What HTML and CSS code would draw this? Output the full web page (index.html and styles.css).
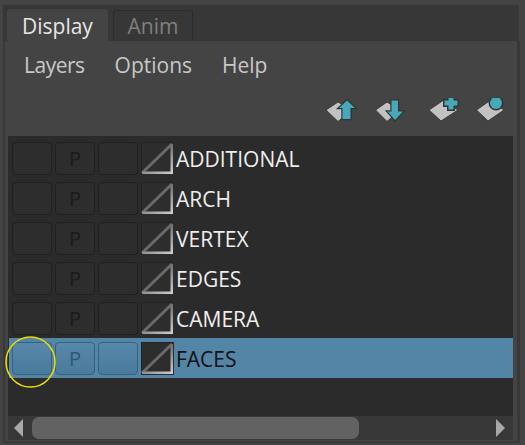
FILE: index.html
```html
<!DOCTYPE html>
<html lang="en">
<head>
  <meta charset="UTF-8" />
  <title>Display Layers</title>
  <link rel="stylesheet" href="styles.css">
</head>
<body>
  <svg class="defs" width="0" height="0">
    <defs>
      <linearGradient id="edge-v" x1="0" y1="0" x2="0" y2="1">
        <stop offset="0" stop-color="#6e6e6e"/>
        <stop offset="1" stop-color="#cfcfcf"/>
      </linearGradient>
      <linearGradient id="edge-h" x1="0" y1="0" x2="1" y2="0">
        <stop offset="0" stop-color="#8c8c8c"/>
        <stop offset="1" stop-color="#cfcfcf"/>
      </linearGradient>
      <symbol id="swatch" viewBox="0 0 33 33">
        <rect width="33" height="33" fill="#2d2d2d"/>
        <path d="M0 0.5 H32.5 M0.5 0 V33" stroke="#222" fill="none"/>
        <path d="M1 31 L31 2" stroke="#6a6a6a" stroke-width="3"/>
        <rect x="29.5" y="2" width="2.5" height="30" fill="url(#edge-v)"/>
        <rect x="1" y="29.5" width="31" height="2.5" fill="url(#edge-h)"/>
      </symbol>
    </defs>
  </svg>
  <div class="window">
    <div class="tabs">
      <div class="tab active">Display</div>
      <div class="tab">Anim</div>
    </div>
    <div class="content">
      <div class="menu">
        <span class="layers">Layers</span>
        <span>Options</span>
        <span>Help</span>
      </div>
      <div class="tools">
        <svg class="tool" width="32" height="26" viewBox="325 98 32 26">
          <path d="M326 110 L338 102 L352 110 L338 121.5 Z" fill="#c2c2c2" stroke="#3a3a3a"/>
          <path d="M347 100.5 L355 108 H350.5 V119 H342.5 V108 H339 Z" fill="#45a9bb" stroke="#333" stroke-width="2.4" paint-order="stroke"/>
        </svg>
        <svg class="tool second" width="32" height="26" viewBox="374 98 32 26">
          <path d="M375.5 110 L387 102 L400 110 L387 121.5 Z" fill="#c2c2c2" stroke="#3a3a3a"/>
          <path d="M391.5 100.5 H398 V111.5 H403 L395 120 L387.5 111.5 H391.5 Z" fill="#45a9bb" stroke="#333" stroke-width="2.4" paint-order="stroke"/>
        </svg>
        <svg class="tool third" width="32" height="26" viewBox="428 98 32 26">
          <path d="M429 110 L443 100.5 L458 110 L441 121 Z" fill="#c2c2c2" stroke="#3a3a3a"/>
          <path d="M448.5 96.5 H453.5 V100.5 H457.5 V105.5 H453.5 V109.5 H448.5 V105.5 H444.5 V100.5 H448.5 Z" fill="#45a9bb" stroke="#333" stroke-width="3" paint-order="stroke"/>
        </svg>
        <svg class="tool fourth" width="32" height="26" viewBox="476 98 32 26">
          <path d="M476.5 110 L490 100.5 L504 110 L488 121 Z" fill="#c2c2c2" stroke="#3a3a3a"/>
          <circle cx="496" cy="103" r="6" fill="#45a9bb" stroke="#333" stroke-width="3" paint-order="stroke"/>
        </svg>
      </div>
      <div class="panel">
        <div class="list">
          <div class="row">
            <div class="btn"></div><div class="btn">P</div><div class="btn"></div>
            <svg class="swatch" width="33" height="33"><use href="#swatch"/></svg>
            <span class="name">ADDITIONAL</span>
          </div>
          <div class="row">
            <div class="btn"></div><div class="btn">P</div><div class="btn"></div>
            <svg class="swatch" width="33" height="33"><use href="#swatch"/></svg>
            <span class="name">ARCH</span>
          </div>
          <div class="row">
            <div class="btn"></div><div class="btn">P</div><div class="btn"></div>
            <svg class="swatch" width="33" height="33"><use href="#swatch"/></svg>
            <span class="name">VERTEX</span>
          </div>
          <div class="row">
            <div class="btn"></div><div class="btn">P</div><div class="btn"></div>
            <svg class="swatch" width="33" height="33"><use href="#swatch"/></svg>
            <span class="name">EDGES</span>
          </div>
          <div class="row">
            <div class="btn"></div><div class="btn">P</div><div class="btn"></div>
            <svg class="swatch" width="33" height="33"><use href="#swatch"/></svg>
            <span class="name">CAMERA</span>
          </div>
          <div class="row selected">
            <div class="btn"></div><div class="btn">P</div><div class="btn"></div>
            <svg class="swatch" width="33" height="33"><use href="#swatch"/></svg>
            <span class="name">FACES</span>
          </div>
        </div>
        <div class="scrollbar">
          <div class="arrow left"></div>
          <div class="track"><div class="thumb"></div></div>
          <div class="arrow right"></div>
        </div>
      </div>
    </div>
  </div>
  <svg class="highlight" width="51" height="52" viewBox="0 0 51 52">
    <ellipse cx="25.5" cy="26" rx="24.5" ry="25" fill="none" stroke="#eee000" stroke-width="1.5"/>
  </svg>
</body>
</html>
```

FILE: styles.css
```css
* {
  box-sizing: border-box;
}
html, body {
  margin: 0;
  height: 100%;
}
body {
  background: #444;
  font-family: "Open Sans", "Noto Sans", sans-serif;
  overflow: hidden;
  position: relative;
}
.defs {
  position: absolute;
}
.window {
  width: 525px;
  height: 445px;
  padding: 5px 0 2px;
  display: flex;
  flex-direction: column;
}
.tabs {
  height: 36px;
  flex: none;
  display: flex;
  align-items: flex-end;
  gap: 5px;
  margin: 0 6px 0 3px;
  padding-left: 4px;
  background: #373737;
}
.tab {
  height: 31px;
  width: 80px;
  display: flex;
  align-items: center;
  justify-content: center;
  background: #373737;
  border: 1px solid #2c2c2c;
  border-bottom: none;
  border-radius: 3px 3px 0 0;
  color: #7f7f7f;
  font-size: 21px;
}
.tab.active {
  height: 32px;
  width: 101px;
  justify-content: flex-start;
  padding: 2px 0 0 15px;
  background: #444;
  border: none;
  color: #e6e6e6;
}
.content {
  flex: 1;
  display: flex;
  flex-direction: column;
  margin-left: 3px;
  margin-right: 5px;
  border-left: 2px solid #383838;
  border-right: 3px solid #383838;
  border-bottom: 2px solid #383838;
  padding: 0 4px 1px 3px;
}
.menu {
  height: 47px;
  flex: none;
  display: flex;
  align-items: center;
  gap: 30px;
  padding-left: 16px;
  color: #c8c8c8;
  font-size: 21px;
}
.layers {
  letter-spacing: -0.5px;
}
.tools {
  height: 48px;
  flex: none;
  display: flex;
  align-items: flex-start;
  padding-left: 317px;
  padding-top: 10px;
}
.tool {
  flex: none;
}
.second {
  margin-left: 17px;
}
.third {
  margin-left: 22px;
}
.fourth {
  margin-left: 16px;
}
.panel {
  flex: 1;
  display: flex;
  flex-direction: column;
  background: #2b2b2b;
}
.list {
  flex: 1;
  padding-top: 2px;
}
.row {
  height: 40px;
  display: flex;
  align-items: center;
  gap: 3px;
  padding-left: 4px;
}
.row.selected {
  background: #5285a6;
  margin-left: 1px;
  padding-left: 3px;
}
.btn {
  width: 40px;
  height: 33px;
  display: flex;
  align-items: center;
  justify-content: center;
  background: #2d2d2d;
  border: 1px solid #202020;
  border-radius: 4px;
  color: #1a1a1a;
  font-size: 20px;
}
.selected .btn {
  background: linear-gradient(#5788a9, #4a7b9c);
  border-color: #37617f;
  color: #2f5573;
}
.swatch {
  flex: none;
}
.name {
  margin: 2px 0 0 -1px;
  color: #eee;
  font-size: 21px;
}
.selected .name {
  color: #111;
}
.scrollbar {
  height: 24px;
  flex: none;
  display: flex;
  align-items: center;
  background: #383838;
}
.track {
  flex: 1;
  height: 22px;
  padding: 0 9px;
}
.thumb {
  width: 327px;
  height: 22px;
  background: #626262;
  border-radius: 7px;
}
.arrow {
  width: 0;
  height: 0;
  flex: none;
  border-top: 9px solid transparent;
  border-bottom: 9px solid transparent;
}
.arrow.left {
  margin-left: 6px;
  border-right: 9px solid #a8a8a8;
}
.arrow.right {
  margin-right: 8px;
  border-left: 9px solid #a8a8a8;
}
.highlight {
  position: absolute;
  left: 5px;
  top: 336px;
}
```
